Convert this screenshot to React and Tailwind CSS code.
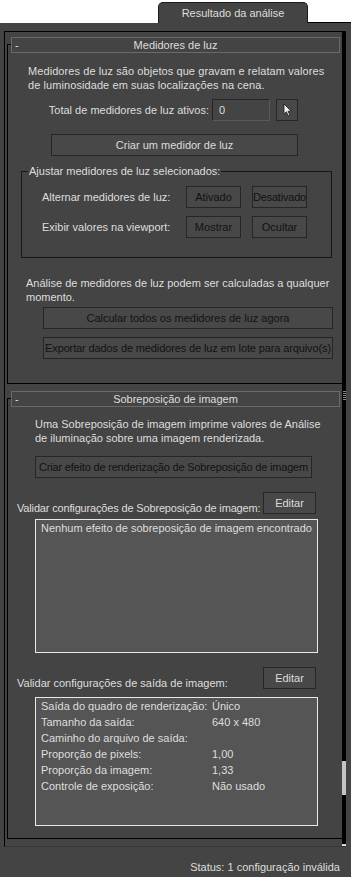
function Btn({ children, className = "", dim = false }) {
  return (
    <div
      className={`flex items-center justify-center h-[22px] border border-[#262626] bg-[#484848] whitespace-nowrap ${
        dim ? "text-[#121212]" : "text-[#dcdcdc]"
      } ${className}`}
    >
      {children}
    </div>
  );
}

function Rollout({ title, children, className = "" }) {
  return (
    <div className={`flex flex-col ml-[2px] ${className}`}>
      {/* barra de título */}
      <div className="flex items-start">
        <div className="w-[4px] h-[9px] mt-[7px] border-l border-t border-black" />
        <div className="w-[329px] h-[16px] border border-[#6a6a6a] grid grid-cols-[22px_1fr_22px] items-center">
          <span className="pl-[3px] leading-[14px]">-</span>
          <span className="text-center leading-[14px]">{title}</span>
          <span />
        </div>
      </div>
      <div className="w-[335px] border-l border-b border-black flex flex-col">
        {children}
      </div>
    </div>
  );
}

export default function App() {
  return (
    <div className="w-[351px] h-[877px] bg-white overflow-hidden font-['Liberation_Sans',Arial,sans-serif] text-[11px] leading-[14px] text-[#dedede]">
      {/* Aba */}
      <div className="flex h-[23px]">
        <div className="w-[158px]" />
        <div className="mt-[2px] w-[150px] h-[21px] border border-b-0 border-[#1c1c1c] rounded-t-[5px] bg-[#444444] flex items-center justify-center">
          Resultado da análise
        </div>
        <div className="flex-1 border-b border-black" />
      </div>

      <div className="bg-[#444444] h-[854px] flex flex-col">
        {/* moldura externa */}
        <div className="ml-[4px] mt-[8px] w-[342px] h-[816px] border-l border-t border-b border-l-black border-t-black border-b-[#363636] flex">
          <div className="w-[337px] flex flex-col">
            <Rollout title="Medidores de luz" className="mt-[5px]">
              <p className="mt-[11px] pl-[20px] whitespace-nowrap tracking-[0.08px]">
                Medidores de luz são objetos que gravam e relatam valores
                <br />
                de luminosidade em suas localizações na cena.
              </p>
              <div className="mt-[7px] flex items-center h-[22px]">
                <div className="w-[201px] text-right">Total de medidores de luz ativos:</div>
                <div className="ml-[3px] w-[58px] h-[22px] border border-[#262626] border-b-[#5a5a5a] border-r-[#5a5a5a] flex items-center pl-[6px]">
                  0
                </div>
                <div className="ml-[6px] w-[22px] h-[22px] border border-[#262626] bg-[#484848] flex items-center justify-center">
                  <svg width="9" height="14" viewBox="0 0 9 14">
                    <path
                      d="M1 1 L1 11 L3.4 8.8 L5.2 12.8 L6.8 12.1 L5 8.2 L8.2 8.2 Z"
                      fill="#f2f2f2"
                      stroke="#1a1a1a"
                      strokeWidth="0.8"
                    />
                  </svg>
                </div>
              </div>
              <Btn className="mt-[13px] ml-[43px] w-[247px]">Criar um medidor de luz</Btn>

              <fieldset className="mt-[8px] ml-[13px] w-[311px] h-[94px] border border-[#161616]">
                <legend className="ml-[6px] px-[1px] leading-[14px]">
                  Ajustar medidores de luz selecionados:
                </legend>
                <div className="mt-[8px] flex items-center pl-[20px]">
                  <span className="w-[144px]">Alternar medidores de luz:</span>
                  <Btn dim className="w-[55px]">Ativado</Btn>
                  <Btn dim className="ml-[11px] w-[55px] tracking-[-0.2px]">Desativado</Btn>
                </div>
                <div className="mt-[8px] flex items-center pl-[20px]">
                  <span className="w-[144px]">Exibir valores na viewport:</span>
                  <Btn dim className="w-[55px]">Mostrar</Btn>
                  <Btn dim className="ml-[11px] w-[55px]">Ocultar</Btn>
                </div>
              </fieldset>

              <p className="mt-[18px] pl-[18px] whitespace-nowrap">
                Análise de medidores de luz podem ser calculadas a qualquer
                <br />
                momento.
              </p>
              <Btn dim className="mt-[3px] ml-[35px] w-[290px]">
                Calcular todos os medidores de luz agora
              </Btn>
              <Btn dim className="mt-[8px] ml-[35px] w-[290px] mb-[24px] tracking-[-0.12px]">
                Exportar dados de medidores de luz em lote para arquivo(s)
              </Btn>
            </Rollout>

            <Rollout title="Sobreposição de imagem" className="mt-[7px]">
              <p className="mt-[10px] pl-[27px] whitespace-nowrap">
                Uma Sobreposição de imagem imprime valores de Análise
                <br />
                de iluminação sobre uma imagem renderizada.
              </p>
              <Btn dim className="mt-[11px] ml-[27px] w-[277px] tracking-[-0.18px]">
                Criar efeito de renderização de Sobreposição de imagem
              </Btn>

              <div className="mt-[14px] flex h-[23px] pl-[9px]">
                <span className="w-[246px] self-end whitespace-nowrap tracking-[-0.16px]">
                  Validar configurações de Sobreposição de imagem:
                </span>
                <Btn className="w-[53px]">Editar</Btn>
              </div>
              <div className="mt-[4px] ml-[27px] w-[283px] h-[134px] border border-[#e8e8e8] bg-[#555555] pl-[5px] pt-[1px]">
                Nenhum efeito de sobreposição de imagem encontrado
              </div>

              <div className="mt-[14px] flex h-[23px] pl-[9px]">
                <span className="w-[246px] self-end whitespace-nowrap">
                  Validar configurações de saída de imagem:
                </span>
                <Btn className="w-[53px]">Editar</Btn>
              </div>
              <div className="mt-[7px] mb-[12px] ml-[27px] w-[283px] h-[129px] border border-[#e8e8e8] bg-[#555555] pl-[5px] leading-[16px]">
                {[
                  ["Saída do quadro de renderização:", "Único"],
                  ["Tamanho da saída:", "640 x 480"],
                  ["Caminho do arquivo de saída:", ""],
                  ["Proporção de pixels:", "1,00"],
                  ["Proporção da imagem:", "1,33"],
                  ["Controle de exposição:", "Não usado"],
                ].map(([k, v]) => (
                  <div key={k} className="flex h-[16px]">
                    <span className="w-[171px] whitespace-nowrap">{k}</span>
                    <span>{v}</span>
                  </div>
                ))}
              </div>
            </Rollout>
          </div>

          {/* barra de rolagem */}
          <div className="w-[4px] bg-black flex flex-col items-center">
            <div className="mt-[359px] flex flex-col gap-[1px]">
              <div className="w-[3px] h-[1px] bg-[#8a8a8a]" />
              <div className="w-[3px] h-[1px] bg-[#8a8a8a]" />
              <div className="w-[3px] h-[1px] bg-[#8a8a8a]" />
              <div className="w-[3px] h-[1px] bg-[#8a8a8a]" />
              <div className="w-[3px] h-[1px] bg-[#8a8a8a]" />
            </div>
            <div className="mt-[361px] w-[4px] h-[34px] bg-[#c4c4c4]" />
            <div className="mt-auto w-[4px] h-[2px] bg-[#d8d8d8]" />
          </div>
        </div>

        <div className="mt-[13px] pr-[11px] text-right">Status: 1 configuração inválida</div>
      </div>
    </div>
  );
}
